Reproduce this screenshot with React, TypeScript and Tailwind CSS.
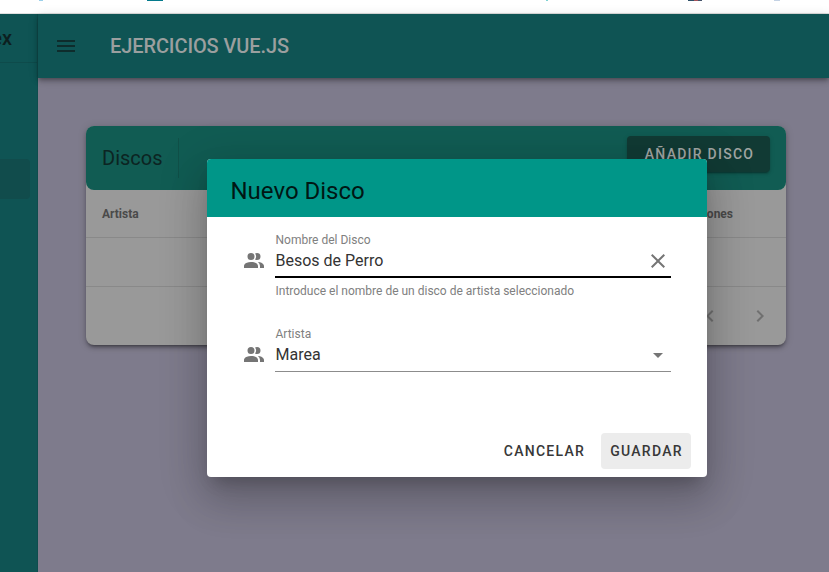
import React from "react";

const PATHS = {
  menu: "M3,6H21V8H3V6M3,11H21V13H3V11M3,16H21V18H3V16Z",
  people:
    "M16 17V19H2V17S2 13 9 13 16 17 16 17M12.5 7.5A3.5 3.5 0 1 0 9 11A3.5 3.5 0 0 0 12.5 7.5M15.94 13A5.32 5.32 0 0 1 18 17V19H22V17S22 13.37 15.94 13M15 4A3.39 3.39 0 0 0 13.07 4.59A5 5 0 0 1 13.07 10.41A3.39 3.39 0 0 0 15 11A3.5 3.5 0 0 0 15 4Z",
  close:
    "M19,6.41L17.59,5L12,10.59L6.41,5L5,6.41L10.59,12L5,17.59L6.41,19L12,13.41L17.59,19L19,17.59L13.41,12L19,6.41Z",
  down: "M7,10L12,15L17,10H7Z",
  left: "M15.41,16.58L10.83,12L15.41,7.41L14,6L8,12L14,18L15.41,16.58Z",
  right: "M8.59,16.58L13.17,12L8.59,7.41L10,6L16,12L10,18L8.59,16.58Z",
};

function Icon({ name, className = "" }: { name: keyof typeof PATHS; className?: string }) {
  return (
    <svg viewBox="0 0 24 24" className={`size-6 shrink-0 fill-current ${className}`}>
      <path d={PATHS[name]} />
    </svg>
  );
}

function BrowserStrip() {
  return (
    <div className="flex h-[14px] shrink-0 items-start border-b border-[#e0e0e0] bg-white">
      <span className="ml-[39px] h-px w-[4px] bg-[#9bd0ea]" />
      <span className="ml-[104px] h-px w-4 bg-[#047a8c]" />
      <span className="ml-[383px] h-px w-[2px] bg-[#7fd3d3]" />
      <span className="ml-[140px] h-px w-[6px] bg-[#2f5068]" />
      <span className="h-px w-[4px] bg-[#a5545c]" />
      <span className="h-px w-[4px] bg-[#45536b]" />
      <span className="ml-[72px] h-px w-[6px] bg-[#c4d2e4]" />
    </div>
  );
}

function Sidebar() {
  return (
    <aside className="flex w-[38px] shrink-0 flex-col overflow-hidden border-r border-[#0e4d4d] bg-[#0f5454]">
      <div className="flex h-[49px] shrink-0 items-center justify-end border-b border-[#0e4b4b] pr-[25px] text-xl font-medium text-[#0c1f1f]">
        ex
      </div>
      <div className="mt-24 mr-[7px] h-10 shrink-0 rounded-r bg-[#114c4c]" />
    </aside>
  );
}

function DiscCard() {
  return (
    <section className="h-[219px] rounded-lg bg-[#999999] shadow-[0_3px_3px_-2px_rgba(0,0,0,0.35),0_3px_4px_rgba(0,0,0,0.2),0_1px_8px_rgba(0,0,0,0.16)]">
      <div className="flex h-16 items-center rounded-lg bg-[#115c53] px-4">
        <h2 className="text-xl text-[#0c2422]">Discos</h2>
        <div className="ml-[15px] h-10 w-px bg-[#105048]" />
        <button className="mb-[8px] ml-auto h-9 w-[143px] rounded bg-[#113a34] pl-[2px] text-sm font-medium tracking-[1.25px] text-[#a0a5a3] shadow-[0_3px_1px_-2px_rgba(0,0,0,0.2),0_2px_2px_rgba(0,0,0,0.14),0_1px_5px_rgba(0,0,0,0.12)]">
          AÑADIR DISCO
        </button>
      </div>
      <div className="flex h-12 items-center justify-between border-b border-[#898989] pr-[53px] pl-4 text-xs font-bold text-[#4a4a4a]">
        <span>Artista</span>
        <span>Acciones</span>
      </div>
      <div className="h-[49px] border-b border-[#898989]" />
      <div className="flex h-[58px] items-center justify-end gap-[26px] pr-[14px] text-[#707070]">
        <Icon name="left" />
        <Icon name="right" />
      </div>
    </section>
  );
}

function Dialog() {
  return (
    <div className="absolute top-[159px] left-[207px] flex h-[318px] w-[500px] flex-col overflow-hidden rounded bg-white shadow-[0_11px_15px_-7px_rgba(0,0,0,0.2),0_24px_38px_3px_rgba(0,0,0,0.14),0_9px_46px_8px_rgba(0,0,0,0.12)]">
      <h1 className="flex h-[58px] shrink-0 items-center bg-[#009688] pt-[6px] pl-[23.5px] text-2xl text-[#001714]">
        Nuevo Disco
      </h1>
      <div className="flex flex-col pt-[14px] pr-9 pl-[35.4px]">
        <div className="flex h-[94px]">
          <Icon name="people" className="mt-[18px] mr-[9.1px] text-[#757575]" />
          <div className="flex-1">
            <div className="h-[47px] border-b-2 border-black">
              <div className="h-[18px] text-xs leading-[18px] text-[#808080]">Nombre del Disco</div>
              <div className="flex h-6 items-center justify-between text-base text-[#333333]">
                <span>Besos de Perro</span>
                <Icon name="close" className="mr-px text-[#757575]" />
              </div>
            </div>
            <p className="pt-[5px] text-xs leading-[16px] text-[#808080]">
              Introduce el nombre de un disco de artista seleccionado
            </p>
          </div>
        </div>
        <div className="flex">
          <Icon name="people" className="mt-[18px] mr-[9.1px] text-[#757575]" />
          <div className="h-[47px] flex-1 border-b border-[#8c8c8c]">
            <div className="h-[18px] text-xs leading-[18px] text-[#808080]">Artista</div>
            <div className="flex h-6 items-center justify-between text-base text-[#333333]">
              <span>Marea</span>
              <Icon name="down" className="mr-px text-[#757575]" />
            </div>
          </div>
        </div>
      </div>
      <div className="mt-auto mb-[9px] flex h-[35px] items-center justify-end gap-2 pr-4 text-sm font-medium tracking-[1.25px] text-[#383838]">
        <button className="h-9 px-2">CANCELAR</button>
        <button className="h-9 w-[90px] rounded bg-[#ececec] pl-px">GUARDAR</button>
      </div>
    </div>
  );
}

export default function App() {
  return (
    <div className="relative flex h-[572px] w-[829px] flex-col overflow-hidden bg-[#7e7b8c] font-[Roboto,sans-serif]">
      <BrowserStrip />
      <div className="flex min-h-0 flex-1">
        <Sidebar />
        <div className="flex-1">
          <header className="flex h-16 items-center bg-[#0f5454] pl-4 shadow-[0_2px_4px_-1px_rgba(0,0,0,0.3),0_4px_5px_rgba(0,0,0,0.14),0_1px_10px_rgba(0,0,0,0.12)]">
            <Icon name="menu" className="text-[#0e2c2c]" />
            <span className="ml-8 text-xl font-medium tracking-[-0.1px] text-[#9b9f9f]">EJERCICIOS VUE.JS</span>
          </header>
          <main className="pt-12 pr-[43px] pl-12">
            <DiscCard />
          </main>
        </div>
      </div>
      <Dialog />
    </div>
  );
}
